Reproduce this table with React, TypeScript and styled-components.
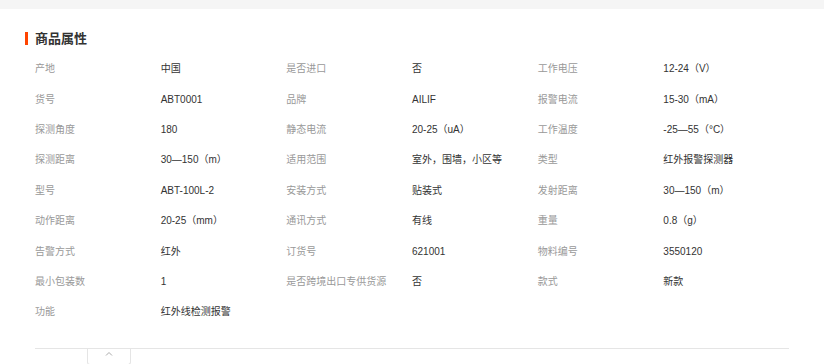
import React from 'react'
import styled, { createGlobalStyle } from 'styled-components'

const GlobalStyle = createGlobalStyle`
  body {
    margin: 0;
    background: #fff;
    font-family: "Liberation Sans", "Noto Sans CJK SC", sans-serif;
  }
`

const TopBar = styled.div`
  height: 9px;
  background: #f5f5f5;
`

const Section = styled.section`
  padding: 23px 35px 0;
`

const Title = styled.h2`
  margin: 0 0 0 -10px;
  padding-left: 7px;
  border-left: 3px solid #ff4400;
  font-size: 13px;
  line-height: 13px;
  font-weight: bold;
  color: #333;
`

const Grid = styled.div`
  display: grid;
  grid-template-columns: repeat(6, 1fr);
  grid-auto-rows: 30.4px;
  align-items: center;
  margin-top: 9px;
`

const Cell = styled.div<{ $label?: boolean }>`
  font-size: 10px;
  line-height: 14px;
  color: ${(p) => (p.$label ? '#999' : '#333')};
  white-space: nowrap;
`

const Footer = styled.div`
  margin-top: 20px;
  border-top: 1px solid #e5e5e5;
  padding-left: 52px;
`

const Toggle = styled.div`
  width: 42px;
  height: 13px;
  border: 1px solid #e5e5e5;
  border-top: none;
  border-radius: 0 0 3px 3px;
  display: flex;
  justify-content: center;
  padding-top: 2px;
`

const attrs: [string, string][] = [
  ['产地', '中国'],
  ['是否进口', '否'],
  ['工作电压', '12-24（V）'],
  ['货号', 'ABT0001'],
  ['品牌', 'AILIF'],
  ['报警电流', '15-30（mA）'],
  ['探测角度', '180'],
  ['静态电流', '20-25（uA）'],
  ['工作温度', '-25—55（°C）'],
  ['探测距离', '30—150（m）'],
  ['适用范围', '室外，围墙，小区等'],
  ['类型', '红外报警探测器'],
  ['型号', 'ABT-100L-2'],
  ['安装方式', '贴装式'],
  ['发射距离', '30—150（m）'],
  ['动作距离', '20-25（mm）'],
  ['通讯方式', '有线'],
  ['重量', '0.8（g）'],
  ['告警方式', '红外'],
  ['订货号', '621001'],
  ['物料编号', '3550120'],
  ['最小包装数', '1'],
  ['是否跨境出口专供货源', '否'],
  ['款式', '新款'],
  ['功能', '红外线检测报警'],
]

const App: React.FC = () => (
  <>
    <GlobalStyle />
    <TopBar />
    <Section>
      <Title>商品属性</Title>
      <Grid>
        {attrs.map(([k, v]) => (
          <React.Fragment key={k}>
            <Cell $label>{k}</Cell>
            <Cell>{v}</Cell>
          </React.Fragment>
        ))}
      </Grid>
      <Footer>
        <Toggle>
          <svg width="8" height="5" viewBox="0 0 8 5">
            <path d="M1 4.5 L4 1.5 L7 4.5" fill="none" stroke="#aaa" strokeWidth="1" />
          </svg>
        </Toggle>
      </Footer>
    </Section>
  </>
)

export default App
